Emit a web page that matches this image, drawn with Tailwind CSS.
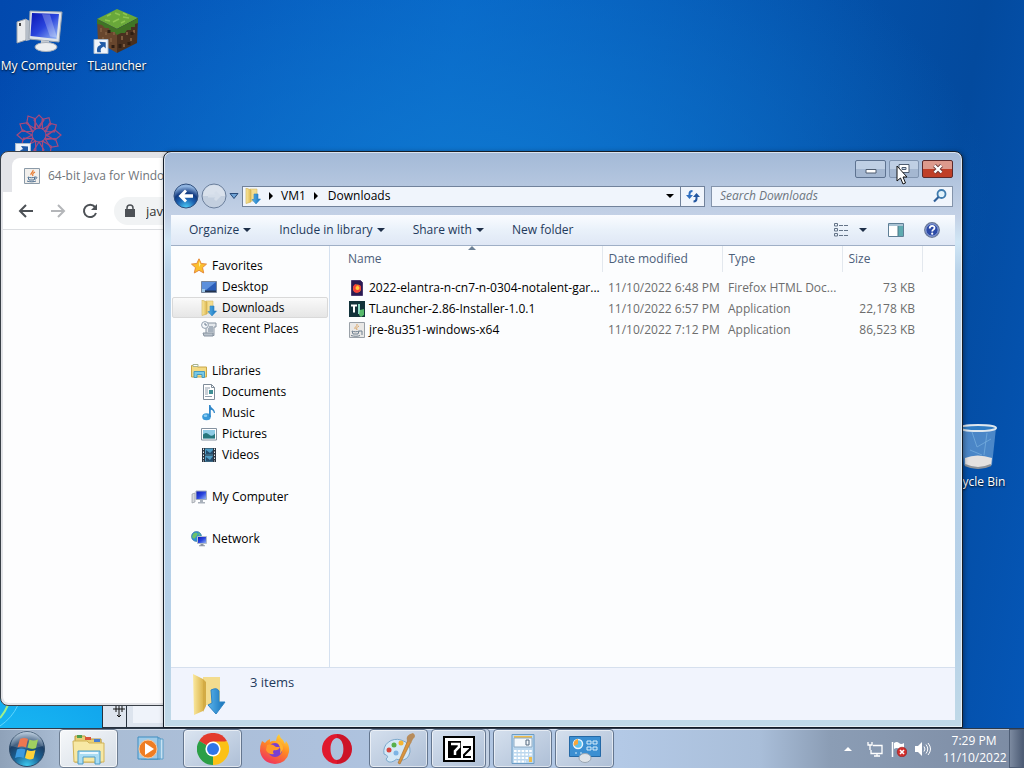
<!DOCTYPE html>
<html lang="en">
<head>
    <meta charset="UTF-8">
    <meta name="viewport" content="width=device-width, initial-scale=1.0">
    <title>Downloads</title>
    <script src="https://cdn.jsdelivr.net/npm/@tailwindcss/browser@4"></script>
</head>
<body class="font-['Open_Sans','Noto_Sans',sans-serif] text-[12px] leading-4 text-black">

    <!-- Shared icons (kept rendered at zero size so the gradients stay usable) -->
    <svg class="absolute h-0 w-0" aria-hidden="true">
        <defs>
            <linearGradient id="gold" x1="0" x2="1"><stop offset="0" stop-color="#fbe9a0"/><stop offset="1" stop-color="#dcb64e"/></linearGradient>
            <linearGradient id="screen" x1="0" y1="0" x2="1" y2="1"><stop offset="0" stop-color="#0a16b4"/><stop offset=".5" stop-color="#2a45dd"/><stop offset="1" stop-color="#9fc0f6"/></linearGradient>
            <linearGradient id="arrow" x1="0" x2="1"><stop offset="0" stop-color="#5ab4ec"/><stop offset="1" stop-color="#1470b8"/></linearGradient>
        </defs>
        <symbol id="folder-down" viewBox="0 0 36 44">
            <path d="M12 5h17v28H12z" fill="#f3dc8e"/>
            <path d="M2 2l10 5v32l-9 4z" fill="url(#gold)"/>
            <path d="M12 7l3 3v24l-3 6z" fill="#d3ab45"/>
            <path d="M20 18q6-3 8 1v11h6L25 42 17 33l4-2z" fill="url(#arrow)" stroke="#2f84c4"/>
        </symbol>
        <symbol id="folder-down-small" viewBox="0 0 16 16">
            <path d="M5 1h7v12H5z" fill="#f3dc8e" stroke="#d8bd66" stroke-width=".6"/>
            <path d="M1 0l5 2v12l-5 1.500z" fill="url(#gold)" stroke="#cfae50" stroke-width=".6"/>
            <path d="M9 6h4v5h2.500l-4.500 5-4-4.500h2z" fill="url(#arrow)" stroke="#2f84c4" stroke-width=".6"/>
        </symbol>
        <symbol id="java" viewBox="0 0 16 16">
            <path d="M.5.5h15v15H.5z" fill="#f1efec" stroke="#8b9aa8"/>
            <path d="M9 2c1 2-3 3-2 5M11 4c-2 1-3 2-2 4" fill="none" stroke="#e8772a" stroke-width="1.200"/>
            <path d="M4 9c2 1 5 1 7 0l-1 3H5zM11 9c3-.5 2 2-.5 2.300M3 13c3 1.200 7 1 9 0" fill="none" stroke="#4b6d8f"/>
        </symbol>
        <symbol id="shortcut" viewBox="0 0 16 16">
            <path d="M.5.5h15v15H.5z" fill="#eef4fb" stroke="#a9b9cb"/>
            <path d="M4 14C3 9 5 7 8 6L6 3l7 .5V10l-2-2c-3 1-4 3-3 6z" fill="#1f5aa6" stroke="none"/>
        </symbol>
        <symbol id="monitor" viewBox="0 0 16 16">
            <path d="M1 5l3-1v9l-3 1z" fill="#d7dadd" stroke="#888f99" stroke-width=".6"/>
            <path d="M5 2h10.500v8.500H5z" fill="url(#screen)" stroke="#a4adba"/>
            <path d="M9 11h3v2h2v1.500H7V13h2z" fill="#a9b1bb"/>
        </symbol>
    </svg>

    <main class="relative h-screen overflow-hidden bg-[#0560c4] bg-[radial-gradient(ellipse_640px_420px_at_0%_100%,#1cc0f5_0%,#12a8ee_20%,transparent_100%),radial-gradient(ellipse_520px_320px_at_46%_26%,#0f78d0_0%,transparent_100%),linear-gradient(100deg,#0249ae_0%,#0663c6_40%,#034a9e_85%,#0557b8_100%)]">

        <!-- Desktop shortcuts -->
        <a href="#" class="absolute top-2 left-0 flex w-[78px] flex-col items-center gap-1 text-white [text-shadow:0_1px_2px_#000]">
            <svg class="h-[46px] w-12" viewBox="0 0 48 46">
                <path d="M2 14l9-3v21l-9 3z" fill="#e9ebed" stroke="#9ba3ad"/>
                <path d="M11 11l4 2v19l-4 1z" fill="#b6bec8"/>
                <path d="M4 15h2v3H4z" fill="#444"/>
                <path d="M15 3l32 1-3 30-30-3z" fill="#dfe4ea" stroke="#98a2ae"/>
                <path d="M17 5l27 1-2.500 25L15.500 28z" fill="url(#screen)"/>
                <path d="M27 6l8 .5 7 23-7-1z" fill="#fff" opacity=".25"/>
                <path d="M26 32l8 1v5h-8z" fill="#c4cad2"/>
                <ellipse cx="31" cy="39" rx="11" ry="4.500" fill="#eceef0" stroke="#a7afb9"/>
            </svg>
            <span class="whitespace-nowrap">My Computer</span>
        </a>
        <a href="#" class="absolute top-2 left-[78px] flex w-[78px] flex-col items-center gap-1 text-white [text-shadow:0_1px_2px_#000]">
            <svg class="h-[46px] w-12" viewBox="0 0 48 46">
                <path d="M24 1l21 9-21 11L4 11z" fill="#69a83a"/>
                <path d="M4 11l20 10v24L5 34z" fill="#68462d"/>
                <path d="M45 10L24 21v24l20-10z" fill="#49301f"/>
                <path d="M4 11l20 10 21-11v5l-3 1v3l-4 0v3l-4 0-2 3-4 0-4 2-3-3-4 0-1-4-4 0-3-3-5-1z" fill="#3f7425"/>
                <path d="M14 8l4-2M22 5l5 2M30 9l6 1M20 14l6-3M12 12l5 1M28 15l4-2M34 7l-4-2" stroke="#8cc551" stroke-width="1.500"/>
                <path d="M8 20v4M13 24v3M18 30v4M10 29v2M21 24v3M29 28v4M34 24v3M38 30v3M41 22v3M31 36v3" stroke="#7d5a3d" stroke-width="2"/>
                <path d="M16 22v3M27 36v4M36 34v3M39 24v3M20 37v3" stroke="#2f1e13" stroke-width="3"/>
                <use href="#shortcut" y="31" width="16" height="15"/>
            </svg>
            <span>TLauncher</span>
        </a>
        <a href="#" aria-label="Shortcut" class="absolute top-[112px] left-[15px]">
            <svg class="h-12 w-12" viewBox="0 0 48 48" fill="none" stroke="#a64a7c" stroke-width="1.200">
                <circle cx="24" cy="23" r="7"/>
                <g id="petals">
                    <path d="M24 16l-5-8 5-5 5 5z M17 20l-4-9 M31 20l4-9"/>
                    <path d="M17 23L8 18l-6 5 6 5z M31 23l9-5 6 5-6 5z M24 30l-5 8 5 5 5-5z"/>
                </g>
                <use href="#petals" transform="rotate(30 24 23)"/>
                <use href="#petals" transform="rotate(60 24 23)"/>
                <use href="#shortcut" y="31" width="16" height="16"/>
            </svg>
        </a>
        <a href="#" class="absolute top-[422px] right-[13px] flex w-[74px] flex-col items-center gap-1 text-white [text-shadow:0_1px_2px_#000]">
            <svg class="h-12 w-12" viewBox="0 0 48 48">
                <path d="M10 6h36l-4 37q-14 7-28 0z" fill="#b7d9f4" fill-opacity=".4"/>
                <path d="M15 36q12-5 27 0l-.8 7q-13 6-26 0z" fill="#e4e1e0"/>
                <path d="M15 43q13 6 26 0" fill="none" stroke="#8d9298" stroke-width="2"/>
                <path d="M22 10l5 15 14-8M37 11l-3 22M20 28l12 5" fill="none" stroke="#79b0e0" stroke-opacity=".7"/>
                <ellipse cx="28" cy="6" rx="18" ry="3" fill="#2f7cc4" stroke="#dfe7ee" stroke-width="2"/>
            </svg>
            <span class="whitespace-nowrap">Recycle Bin</span>
        </a>

        <!-- Wallpaper light streak -->
        <svg class="absolute bottom-10 left-0 h-6 w-24" viewBox="0 0 96 24" fill="none">
            <path d="M0 14Q5 8 8 1" stroke="#9df08c" stroke-width="2"/>
            <path d="M0 22Q12 14 18 1" stroke="#5fd6fb"/>
        </svg>

        <!-- Window at the back -->
        <div class="absolute bottom-10 left-[102px] h-20 w-24 border border-[#27313d] bg-[#dde4ee]">
            <div class="absolute inset-y-0 left-[23px] w-px bg-[#27313d]"></div>
            <div class="absolute right-0 bottom-1 left-[30px] h-8 bg-[#eff3fa]"></div>
            <svg class="absolute bottom-[10px] left-[10px] h-3 w-3" viewBox="0 0 12 12" stroke="#111" fill="none"><path d="M6 0v12M0 4h12M3 1v6M9 1v6M4 10l2 2 2-2"/></svg>
        </div>

        <!-- Browser window -->
        <section class="absolute top-[151px] bottom-[62px] left-0 flex w-[300px] flex-col overflow-hidden rounded-lg border border-[#3a4048] bg-[#e3e4e8]">
            <div class="flex pt-[6px] pl-[11px]">
                <div class="flex h-[34px] w-60 items-center gap-2 rounded-t-lg bg-white pt-px pl-3 whitespace-nowrap text-[#70757a]">
                    <svg class="h-4 w-4"><use href="#java"/></svg>
                    <span>64-bit Java for Windows</span>
                </div>
            </div>
            <div class="mx-[2px] flex h-[38px] items-center gap-4 border-b border-[#dcdee1] bg-white pl-[15px] text-[#4d5156]">
                <button aria-label="Back"><svg class="h-4 w-4" viewBox="0 0 16 16" fill="none" stroke="currentColor" stroke-width="2"><path d="M15 8H2M8 2L2 8l6 6"/></svg></button>
                <button aria-label="Forward" class="text-[#b4b6b9]"><svg class="h-4 w-4" viewBox="0 0 16 16" fill="none" stroke="currentColor" stroke-width="2"><path d="M1 8h13M8 2l6 6-6 6"/></svg></button>
                <button aria-label="Reload"><svg class="h-4 w-4" viewBox="0 0 16 16" fill="none" stroke="currentColor" stroke-width="2"><path d="M13 4a6.200 6.200 0 1 0 1 6"/><path d="M15 1v6H9z" fill="currentColor" stroke="none"/></svg></button>
                <div class="flex h-7 flex-1 items-center gap-[10px] rounded-l-full bg-[#f1f3f4] pl-[10px]">
                    <svg class="h-[14px] w-3" viewBox="0 0 12 14"><path d="M1 5h10v8H1z" fill="#4d5156"/><path d="M3 6V4a3 3 0 0 1 6 0v2" fill="none" stroke="#4d5156" stroke-width="1.500"/></svg>
                    <input aria-label="Address" value="java.com" class="w-24 bg-transparent text-[13px] text-[#333]">
                </div>
            </div>
            <div class="mx-[2px] mb-[2px] flex-1 rounded-b-md bg-[#fdfdfe]"></div>
        </section>

        <!-- Explorer window -->
        <section class="absolute top-[151px] right-[61px] bottom-10 left-[163px] flex flex-col rounded-t-lg border border-[#151d28] bg-[linear-gradient(180deg,#a3b9d7_0,#b4c6df_32px,#c3d1e6_64px,#d0e6f5_90px,#b9d3ea_120px,#b5d0e8_80%,#c0d9e8_100%)] px-[7px] pb-[7px] shadow-[inset_0_0_0_1px_rgba(255,255,255,0.6),1px_1px_5px_rgba(0,0,0,0.4)]">
            <div class="relative flex justify-end gap-[3px] pt-2">
                <button aria-label="Minimize" class="flex h-[18px] w-[31px] items-center justify-center rounded-xs border border-[#5e7391] bg-linear-to-b from-[#bfcfe4] from-50% to-[#a4b7d1] to-50%">
                    <svg class="h-3 w-3" viewBox="0 0 12 12"><path d="M1 6.500h10v3.500H1z" fill="#fff" stroke="#4e5c70"/></svg>
                </button>
                <button aria-label="Maximize" class="flex h-[18px] w-[30px] items-center justify-center rounded-xs border border-[#8094b0] bg-linear-to-b from-[#bfcfe4] from-50% to-[#a4b7d1] to-50%">
                    <svg class="h-3 w-3" viewBox="0 0 12 12"><path d="M1 1.500h10v8H1z" fill="#fff" stroke="#4e5c70"/><path d="M4 4.500h4v2H4z" fill="#c9d6e7" stroke="#4e5c70"/></svg>
                </button>
                <button aria-label="Close" class="mr-[2px] flex h-[18px] w-[31px] items-center justify-center rounded-xs border border-[#5b2a2c] bg-linear-to-b from-[#dd9a8d] from-50% to-[#bf3f28] to-50%">
                    <svg class="h-3 w-3" viewBox="0 0 12 12"><path d="M2.500 2.500l7 7m0-7l-7 7" stroke="#6b3a3a" stroke-width="4"/><path d="M2.500 2.500l7 7m0-7l-7 7" stroke="#fff" stroke-width="2.400"/></svg>
                </button>
                <!-- Pointer -->
                <svg class="absolute top-[13px] right-[47px] h-5 w-3" viewBox="0 0 12 20"><path d="M1 1v15l3.500-3 2.500 6 2.500-1-2.500-6H11z" fill="#fff" stroke="#111"/></svg>
            </div>

            <!-- Address row -->
            <div class="mt-1 mb-[5px] flex h-7 items-center pr-[2px] pl-[2px]">
                <button aria-label="Back" class="shrink-0">
                    <svg class="h-[26px] w-[26px]" viewBox="0 0 26 26">
                        <defs><radialGradient id="back" cx=".5" cy="1" r=".9"><stop offset="0" stop-color="#4fd2fb"/><stop offset=".45" stop-color="#1b5fae"/><stop offset=".7" stop-color="#123a80"/><stop offset="1" stop-color="#8fb3df"/></radialGradient></defs>
                        <circle cx="13" cy="13" r="12" fill="url(#back)" stroke="#31507e"/>
                        <path d="M12 6.500L5.500 13l6.500 6.500 2-2-2.500-2.700H20v-3.600h-8.500L14 8.500z" fill="#fff"/>
                    </svg>
                </button>
                <button aria-label="Forward" class="ml-[2px] shrink-0">
                    <svg class="h-[26px] w-[26px]" viewBox="0 0 26 26"><circle cx="13" cy="13" r="12" fill="#c3cfdf" stroke="#6b7f9c"/><path d="M2 13a11 11 0 0 1 22 0z" fill="#d9e1ec"/><path d="M7 13h11M14 9l4 4-4 4" fill="none" stroke="#d4dde9" stroke-width="3"/></svg>
                </button>
                <button aria-label="Recent locations" class="ml-[2px] shrink-0"><svg class="h-2 w-[10px]" viewBox="0 0 10 8"><path d="M1 1.500h8L5 6.500z" fill="#6fa3d6" stroke="#274a79"/></svg></button>
                <div class="ml-[3px] flex h-[21px] min-w-0 flex-1 items-center border border-[#71829b] bg-[#f0f5fc]">
                    <nav class="flex flex-1 items-center pl-[2px]">
                        <svg class="h-4 w-4"><use href="#folder-down-small"/></svg>
                        <svg class="ml-[6px] h-2 w-2" viewBox="0 0 8 8"><path d="M2 0l4 4-4 4z"/></svg>
                        <a href="#" class="ml-[6px]">VM1</a>
                        <svg class="ml-[6px] h-2 w-2" viewBox="0 0 8 8"><path d="M2 0l4 4-4 4z"/></svg>
                        <a href="#" class="ml-2">Downloads</a>
                    </nav>
                    <button aria-label="Previous locations" class="px-[6px]"><svg class="h-2 w-2" viewBox="0 0 8 8"><path d="M0 2h8L4 6z"/></svg></button>
                    <button aria-label="Refresh" class="flex h-full w-6 items-center justify-center border-l border-[#71829b]">
                        <svg class="h-4 w-4" viewBox="0 0 16 16"><path d="M1 7h7l-3.500 4z" fill="#2f6fc0"/><path d="M4.500 8V6Q4.500 3 7.500 3" fill="none" stroke="#2f6fc0" stroke-width="2"/><path d="M8 9h7l-3.500-4z" fill="#2256a0"/><path d="M11.500 8v2.500q0 3-3 3" fill="none" stroke="#2256a0" stroke-width="2"/></svg>
                    </button>
                </div>
                <label class="ml-[6px] flex h-[21px] w-[242px] items-center border border-[#8494ab] bg-[#f0f5fc] pr-1 pl-2">
                    <input type="search" aria-label="Search Downloads" placeholder="Search Downloads" class="w-full bg-transparent italic outline-none placeholder:text-[#6d7580]">
                    <svg class="h-4 w-4 shrink-0" viewBox="0 0 16 16" fill="none"><circle cx="9.500" cy="6" r="4" fill="#e2f3fc" stroke="#3f7bae" stroke-width="1.800"/><path d="M6.500 9L2 13.500" stroke="#2f5f98" stroke-width="2.200"/></svg>
                </label>
            </div>

            <!-- Command bar -->
            <div class="flex h-[31px] items-center border-b border-[#9fafc6] bg-linear-to-b from-[#fafcff] via-[#e9f1fa] via-50% to-[#dfe7f5] pr-[15px] pl-[18px] whitespace-nowrap text-[#1e395b]">
                <button class="flex items-center gap-1">Organize <svg class="h-2 w-2" viewBox="0 0 8 8"><path d="M0 2h8L4 6z" fill="#1e2f48"/></svg></button>
                <button class="ml-7 flex items-center gap-1">Include in library <svg class="h-2 w-2" viewBox="0 0 8 8"><path d="M0 2h8L4 6z" fill="#1e2f48"/></svg></button>
                <button class="ml-7 flex items-center gap-1">Share with <svg class="h-2 w-2" viewBox="0 0 8 8"><path d="M0 2h8L4 6z" fill="#1e2f48"/></svg></button>
                <button class="ml-7">New folder</button>
                <button aria-label="Change view" class="ml-auto flex items-center gap-[10px]">
                    <svg class="h-4 w-4" viewBox="0 0 16 16" fill="none" stroke="#647488"><path d="M1.500 1.500h3v2.500h-3zM1.500 6.500h3V9h-3zM1.500 11.500h3V14h-3z"/><path d="M6 3.500h4m1 0h4M6 8.500h4m1 0h4M6 13.500h4m1 0h4"/></svg>
                    <svg class="h-2 w-2" viewBox="0 0 8 8"><path d="M0 2h8L4 6z" fill="#1e2f48"/></svg>
                </button>
                <button aria-label="Preview pane" class="ml-[21px]"><svg class="h-4 w-4" viewBox="0 0 16 16"><path d="M.5 1.500h15v13H.5z" fill="#fff" stroke="#5f7f96"/><path d="M1 2h14v2H1z" fill="#a9c3d4"/><path d="M10 4h5v10h-5z" fill="#5eaab0"/><path d="M10 4v10" stroke="#4c7585"/></svg></button>
                <button aria-label="Help" class="ml-5">
                    <svg class="h-4 w-4" viewBox="0 0 16 16"><circle cx="8" cy="8" r="7.300" fill="#2c4aa6" stroke="#6c7a96" stroke-width="1.200"/><circle cx="8" cy="8" r="6.200" fill="none" stroke="#b9c9ef" stroke-width=".8"/><path d="M5.700 6.500C5.700 3 10.700 3.200 10.500 6c0 1.600-2.300 1.700-2.300 3.500" fill="none" stroke="#fff" stroke-width="1.800"/><circle cx="8.200" cy="11.700" r="1.100" fill="#fff"/></svg>
                </button>
            </div>

            <div class="flex min-h-0 flex-1 bg-[#fcfdfe]">
                <!-- Navigation pane -->
                <nav class="flex w-[159px] shrink-0 flex-col gap-[21px] border-r border-[#d5e1f0] pt-[9px] whitespace-nowrap">
                    <ul>
                        <li><a href="#" class="flex h-[21px] items-center gap-[5px] pl-5">
                            <svg class="h-4 w-4" viewBox="0 0 16 16"><path d="M8 .8l2.200 4.700 5.300.6-4 3.500 1.200 5.400L8 12.300 3.300 15l1.200-5.400-4-3.500 5.300-.6z" fill="#fbc02d" stroke="#e58a3c"/><path d="M8 3l1.400 3.400L8 9z" fill="#fff1a8"/></svg>
                            Favorites</a></li>
                        <li><a href="#" class="flex h-[21px] items-center gap-[5px] pl-[30px]">
                            <svg class="h-4 w-4" viewBox="0 0 16 16"><path d="M.5 2.500h15v11H.5z" fill="#2a5db8" stroke="#76849a"/><path d="M1 3h14L5 11H1z" fill="#5d90dc"/><path d="M1 11.500h14v1.500H1z" fill="#23334d"/><path d="M1 10h3v3H1z" fill="#9cc6e8"/></svg>
                            Desktop</a></li>
                        <li><a href="#" aria-current="page" class="mr-px ml-px flex h-[21px] items-center gap-[5px] rounded-xs border border-[#d9d9d9] bg-linear-to-b from-[#fafafa] to-[#e6e6e6] pl-7">
                            <svg class="h-4 w-4"><use href="#folder-down-small"/></svg>
                            Downloads</a></li>
                        <li><a href="#" class="flex h-[21px] items-center gap-[5px] pl-[30px]">
                            <svg class="h-4 w-4" viewBox="0 0 16 16"><path d="M5 2h10v4h-2v8.500H5z" fill="#e4e8ec" stroke="#8793a0"/><path d="M2 12h10v3H3z" fill="#b9c2cb" stroke="#8793a0"/><circle cx="4" cy="4" r="3.400" fill="#f5f8fb" stroke="#93a1b0"/><path d="M4 2v2h2M8 6h4M7 8h5M7 10h5" fill="none" stroke="#6b7c90"/></svg>
                            Recent Places</a></li>
                    </ul>
                    <ul>
                        <li><a href="#" class="flex h-[21px] items-center gap-[5px] pl-5">
                            <svg class="h-4 w-4" viewBox="0 0 16 16"><path d="M.5 2.500h5l1 1.500h9v10H.5z" fill="#f3da83" stroke="#c9a648"/><path d="M2 1.500h5v2H2z" fill="#fff" stroke="#a8b490"/><path d="M3 8.500h10.500v6H11v-3H6v3H3z" fill="#79c9e6" stroke="#469bc0"/></svg>
                            Libraries</a></li>
                        <li><a href="#" class="flex h-[21px] items-center gap-[5px] pl-[30px]">
                            <svg class="h-4 w-4" viewBox="0 0 16 16"><path d="M2.500.5h8l3 3v12h-11z" fill="#fff" stroke="#7f8c99"/><path d="M10.500.5v3h3" fill="none" stroke="#7f8c99"/><path d="M4 4h5M4 6h3M4 8h3M4 10h3M4 12.500h7" stroke="#93a0ae"/><path d="M8 6h4v4H8z" fill="#3f8f94"/></svg>
                            Documents</a></li>
                        <li><a href="#" class="flex h-[21px] items-center gap-[5px] pl-[30px]">
                            <svg class="h-4 w-4" viewBox="0 0 16 16"><ellipse cx="5.500" cy="11.800" rx="4.300" ry="3.500" fill="#3a9ad9"/><path d="M8 12V0h1.500c0 3 4.500 3.500 4.500 8h-1.200c0-2-1.500-3-3-3.300V12z" fill="#2f86c8"/><ellipse cx="4.500" cy="10.800" rx="1.800" ry="1.200" fill="#8dcdf2"/></svg>
                            Music</a></li>
                        <li><a href="#" class="flex h-[21px] items-center gap-[5px] pl-[30px]">
                            <svg class="h-4 w-4" viewBox="0 0 16 16"><path d="M.5 2.500h15v11.500H.5z" fill="#fff" stroke="#8492a0"/><path d="M2 4h12v8.500H2z" fill="#8dcbe6"/><path d="M2 8.500q3-3 6 0t6-1v5H2z" fill="#26777d"/></svg>
                            Pictures</a></li>
                        <li><a href="#" class="flex h-[21px] items-center gap-[5px] pl-[30px]">
                            <svg class="h-4 w-4" viewBox="0 0 16 16"><path d="M1 1h14v14H1z" fill="#2b3440"/><path d="M4 1.500h8v6H4zM4 8.500h8v6H4z" fill="#4f9cc4"/><path d="M5 3l4 3 3-3v4H5zM5 10l4 3 3-4v5H5z" fill="#254c6c"/><path d="M2.500 1.500v13M13.500 1.500v13" stroke="#dfe6ec" stroke-dasharray="1.500 1.500"/></svg>
                            Videos</a></li>
                    </ul>
                    <a href="#" class="flex h-[21px] items-center gap-[5px] pl-5"><svg class="h-4 w-4"><use href="#monitor"/></svg>My Computer</a>
                    <a href="#" class="flex h-[21px] items-center gap-[5px] pl-5">
                        <svg class="h-4 w-4" viewBox="0 0 16 16"><circle cx="5.500" cy="5.500" r="5" fill="#2f8fd4" stroke="#2a6a9f" stroke-width=".6"/><path d="M2 3q3-3 5 0L5 6 3 8 1 6zM7 1l3 3-2 1z" fill="#6cc26a"/><path d="M6.500 5.500h9v7h-9z" fill="url(#screen)" stroke="#b5bfcb"/><path d="M9.500 13h3v1.200H14v1H8v-1h1.500z" fill="#8d96a2"/></svg>
                        Network</a>
                </nav>

                <!-- File list -->
                <div class="relative min-w-0 flex-1">
                    <svg class="absolute top-0 left-[138px] h-1 w-2" viewBox="0 0 8 4"><path d="M0 4l4-4 4 4z" fill="#6d8196"/></svg>
                    <table class="w-full table-fixed border-collapse whitespace-nowrap text-[#6d6d6d]">
                        <colgroup>
                            <col class="w-[272px]"><col class="w-[120px]"><col class="w-[120px]"><col class="w-20"><col>
                        </colgroup>
                        <thead class="text-left text-[#4c607a]">
                            <tr class="h-[26px]">
                                <th scope="col" class="border-r border-[#e3e8ee] pl-[18px] font-normal">Name</th>
                                <th scope="col" class="border-r border-[#e3e8ee] pl-[6px] font-normal">Date modified</th>
                                <th scope="col" class="border-r border-[#e3e8ee] pl-[6px] font-normal">Type</th>
                                <th scope="col" class="border-r border-[#e3e8ee] pl-[6px] font-normal">Size</th>
                                <td></td>
                            </tr>
                        </thead>
                        <tbody>
                            <tr class="h-[5px]"></tr>
                            <tr class="h-[21px]">
                                <td class="pl-[19px]"><a href="#" class="flex items-center gap-1 text-black">
                                    <svg class="h-4 w-4 shrink-0" viewBox="0 0 16 16"><path d="M2.500.5h9l2 2v13h-11z" fill="#2b1a52" stroke="#4a3a70"/><circle cx="8" cy="8.500" r="4" fill="#ff8a2b"/><path d="M4 7q1-3 3-3l1 2 3-1q2 3 0 6t-6 1z" fill="#f4403a"/><circle cx="8.500" cy="8" r="2" fill="#ffca3a"/></svg>
                                    <span class="truncate">2022-elantra-n-cn7-n-0304-notalent-gar...</span></a></td>
                                <td class="pl-[6px]">11/10/2022 6:48 PM</td>
                                <td class="pl-[6px]">Firefox HTML Doc...</td>
                                <td class="pr-[7px] text-right">73 KB</td>
                                <td></td>
                            </tr>
                            <tr class="h-[21px]">
                                <td class="pl-[19px]"><a href="#" class="flex items-center gap-1 text-black">
                                    <svg class="h-4 w-4 shrink-0" viewBox="0 0 16 16"><path d="M0 0h16v16H0z" fill="#12323a"/><path d="M2 4.500h6M5 4.500v7" stroke="#fff" stroke-width="2"/><path d="M10 3v9h2" fill="none" stroke="#8fd9c4" stroke-width="2"/><path d="M11 9l4-1v6l-3 2-2-2z" fill="#57b96b"/></svg>
                                    <span>TLauncher-2.86-Installer-1.0.1</span></a></td>
                                <td class="pl-[6px]">11/10/2022 6:57 PM</td>
                                <td class="pl-[6px]">Application</td>
                                <td class="pr-[7px] text-right">22,178 KB</td>
                                <td></td>
                            </tr>
                            <tr class="h-[21px]">
                                <td class="pl-[19px]"><a href="#" class="flex items-center gap-1 text-black">
                                    <svg class="h-4 w-4 shrink-0" viewBox="0 0 16 16"><path d="M.5.5h15v15H.5z" fill="#e9e8e6" stroke="#9aa1a8"/><path d="M8 2c1 2-3 3-2 5M10 4c-2 1-3 2-2 4" fill="none" stroke="#d9a05c"/><path d="M3 9c2 1 5 1 7 0l-1 3H4zM2 13.500c3 1 7 1 9 0M10 9h3v4" fill="none" stroke="#6f8090"/></svg>
                                    <span>jre-8u351-windows-x64</span></a></td>
                                <td class="pl-[6px]">11/10/2022 7:12 PM</td>
                                <td class="pl-[6px]">Application</td>
                                <td class="pr-[7px] text-right">86,523 KB</td>
                                <td></td>
                            </tr>
                        </tbody>
                    </table>
                </div>
            </div>

            <!-- Details pane -->
            <div class="flex h-[53px] shrink-0 border-t border-[#d6e0ee] bg-[#f1f4fd] pt-1 pl-5 text-[#1e395b]">
                <svg class="h-[44px] w-9"><use href="#folder-down"/></svg>
                <p class="pt-[2px] pl-[23px] text-[13px]">3 items</p>
            </div>
        </section>

        <!-- Taskbar -->
        <footer class="absolute inset-x-0 bottom-0 flex h-10 items-stretch border-t border-[#2d3a4b] bg-[linear-gradient(90deg,#8fa2b9_0,#a9bcd3_60px,#adc1dd_320px,#b3c9e6_620px,#a9bed9_760px,#8b9db5_830px,#7c8ba3_100%)] shadow-[inset_0_1px_0_rgba(255,255,255,0.5)]">
            <button aria-label="Start" class="mr-[13px] ml-2">
                <svg class="h-[38px] w-[38px]" viewBox="0 0 38 38">
                    <defs><radialGradient id="orb" cx=".5" cy="1" r="1"><stop offset="0" stop-color="#3fd0f5"/><stop offset=".4" stop-color="#1a6295"/><stop offset=".7" stop-color="#1c3f66"/><stop offset="1" stop-color="#b9cde0"/></radialGradient></defs>
                    <circle cx="19" cy="19" r="17.500" fill="url(#orb)" stroke="#2d4a68"/>
                    <path d="M12 9q4-2 8 0l-2 8.500q-4-2-8.500 0z" fill="#ea5a2b"/>
                    <path d="M21.500 9.500q4 2 8.500 0l-2 8.500q-4 2-8.500-.5z" fill="#8cc63f"/>
                    <path d="M9 19.500q4-2 8.500 0l-2 8.500q-4-2-8.500 0z" fill="#3b9ae0"/>
                    <path d="M19 20q4 2 8.500 0l-2 8.500q-4 2-8.500-.5z" fill="#fdd13a"/>
                    <path d="M3 16a16 16 0 0 1 32 0q-16 5-32 0z" fill="#fff" opacity=".18"/>
                </svg>
            </button>
            <div class="flex gap-[3px]">
                <button aria-label="File Explorer" class="flex w-[59px] items-center justify-center rounded-sm border border-[#6e7e92] bg-linear-to-br from-[#f6f8fa] to-[#d5dde6] shadow-[inset_0_0_0_1px_#ffffffb0]">
                    <svg class="h-8 w-9" viewBox="0 0 36 32"><path d="M4 3h10l2 3h14l1 23H4z" fill="#e9cf76" stroke="#b9983f"/><path d="M6 2h5v3H6z" fill="#4fa04c"/><path d="M14 4h6v3h-6z" fill="#d9553a"/><path d="M23 6h6v3h-6z" fill="#4a7fd0"/><path d="M2 8h14l2 2h15v19H3z" fill="#f7e8a4" stroke="#d1b358"/><path d="M7 18h22v13h-5v-7H12v7H7z" fill="#a9dcf3" stroke="#4a9cc8"/><path d="M9 20h18" stroke="#e9f8ff" stroke-width="2"/></svg>
                </button>
                <button aria-label="Media Player" class="flex w-[59px] items-center justify-center">
                    <svg class="h-7 w-7" viewBox="0 0 28 28"><path d="M7 4h19v20H7z" fill="#c9e2f2" stroke="#5c9fca"/><path d="M4 3h19v21H4z" fill="#b6d7ee" stroke="#4b96c6"/><path d="M1 2h20v22H1z" fill="#9fcbe8" stroke="#3f8dc0"/><circle cx="11" cy="14" r="9" fill="#ee7d23" stroke="#f9c79a"/><path d="M8 8l9 6-9 6z" fill="#fff"/></svg>
                </button>
                <button aria-label="Chrome" class="flex w-[59px] items-center justify-center rounded-sm border border-[#64768f] bg-linear-to-br from-[#dbe5f1] to-[#aebfd6] shadow-[inset_0_0_0_1px_#ffffff90]">
                    <svg class="h-8 w-8" viewBox="0 0 32 32"><path d="M16 16L2.100 8A16 16 0 0 1 29.900 8z" fill="#e33b2e"/><path d="M16 16L29.900 8A16 16 0 0 1 16 32z" fill="#fbc116"/><path d="M16 16v16A16 16 0 0 1 2.100 8z" fill="#2c9f46"/><path d="M16 8.500h14.100L22.500 20 16 32l6.500-12z" fill="#fbc116"/><path d="M9.500 19.800L2.100 8 10 13z" fill="#2c9f46"/><circle cx="16" cy="16" r="7.600" fill="#fff"/><circle cx="16" cy="16" r="6" fill="#2f76e8"/></svg>
                </button>
                <button aria-label="Firefox" class="flex w-[59px] items-center justify-center">
                    <svg class="h-8 w-8" viewBox="0 0 32 32"><defs><linearGradient id="fox" x1=".8" y1="0" x2=".3" y2="1"><stop offset="0" stop-color="#ffe03a"/><stop offset=".45" stop-color="#ff8a22"/><stop offset="1" stop-color="#f0305f"/></linearGradient></defs><path d="M3 8l3 2q2-3 5-4l0 3q3-2 6-1 0-4 3-7 1 4 4 6l2 4 1-3q4 5 3 11-2 11-14 12Q3 30 1 18q0-6 2-10z" fill="url(#fox)"/><circle cx="16" cy="17" r="7" fill="#7a3fd0"/><path d="M8 12q5-2 9 2l4 0q-2 4-6 3-2 2 0 4-6 1-8-4z" fill="#ff9a2a"/><path d="M16 8q8 0 8 8l-3 5q2-8-5-13z" fill="#ffb32e"/></svg>
                </button>
                <button aria-label="Opera" class="flex w-[59px] items-center justify-center">
                    <svg class="h-8 w-8" viewBox="0 0 32 32"><path fill-rule="evenodd" d="M16 1a15 15 0 1 1 0 30 15 15 0 0 1 0-30zm0 4c-4 0-6.500 5-6.500 11S12 27 16 27s6.500-5 6.500-11S20 5 16 5z" fill="#e0182d"/><path d="M16 1q13 1 15 15-2 14-15 15l0-4q6-1 6.500-11Q22 6 16 5z" fill="#a80e20" opacity=".35"/></svg>
                </button>
                <button aria-label="Paint" class="flex w-[59px] items-center justify-center rounded-sm border border-[#64768f] bg-linear-to-br from-[#d5e0ee] to-[#aebfd6] shadow-[inset_0_0_0_1px_#ffffff90]">
                    <svg class="h-8 w-9" viewBox="0 0 36 32"><path d="M3 21C1 11 11 4 20 7q10 3 9 12-2 9-10 8-4-2-6 1-6 3-8-2 4-3-2-5z" fill="#d4e8f6" stroke="#7ba8cb"/><circle cx="8" cy="17" r="2.500" fill="#d9453c"/><circle cx="13" cy="12" r="2.500" fill="#57b04b"/><circle cx="20" cy="10" r="2.500" fill="#f4b533"/><circle cx="15" cy="20" r="2.500" fill="#7db4e4"/><path d="M27 7l3 2-11 22-2-1z" fill="#d9953f" stroke="#a66a24" stroke-width=".6"/><path d="M26 8Q24 2 32 0q4 3 0 6l-2 4z" fill="#b78c5c"/></svg>
                </button>
                <button aria-label="7-Zip" class="relative mr-1 flex w-[55px] items-center justify-center rounded-sm border border-[#64768f] bg-linear-to-br from-[#d5e0ee] to-[#aebfd6] shadow-[inset_0_0_0_1px_#ffffff90,3px_0_0_#c2d0e3,4px_0_0_#64768f]">
                    <svg class="h-[26px] w-8" viewBox="0 0 32 26"><path d="M1 1h30v24H1z" fill="#fff" stroke="#000" stroke-width="2"/><path d="M5 5h13v17H5z"/><path d="M8 8h8v3l-4 4v4" fill="none" stroke="#fff" stroke-width="2.500"/><path d="M20 11h7v2l-6 6v2h7" fill="none" stroke="#000" stroke-width="2"/></svg>
                </button>
                <button aria-label="Calculator" class="flex w-[59px] items-center justify-center rounded-sm border border-[#64768f] bg-linear-to-br from-[#d5e0ee] to-[#aebfd6] shadow-[inset_0_0_0_1px_#ffffff90]">
                    <svg class="h-[30px] w-6" viewBox="0 0 24 30"><path d="M1 .5h22v29H1z" fill="#bcd8ef" stroke="#6b9cc5"/><path d="M3 2h18v2H3z" fill="#eebc4c"/><path d="M3 4h18v9H3z" fill="#f3f8fc" stroke="#8caac4"/><path d="M15 6h3v5h-3z" fill="none" stroke="#51667c"/><path d="M3 17h18M3 20.500h18M3 24h18M3 27.500h12" stroke="#fff" stroke-width="2.200" stroke-dasharray="2.600 1.200"/><path d="M18 23h3v5h-3z" fill="#eebc4c"/></svg>
                </button>
                <button aria-label="Control Panel" class="flex w-[59px] items-center justify-center rounded-sm border border-[#64768f] bg-linear-to-br from-[#d5e0ee] to-[#aebfd6] shadow-[inset_0_0_0_1px_#ffffff90]">
                    <svg class="h-7 w-8" viewBox="0 0 32 28"><path d="M.5 1.500h31v20H.5z" fill="#3b8fd2" stroke="#2469a6"/><circle cx="9" cy="9" r="4.500" fill="#5cc0ee" stroke="#e7f4fd" stroke-width="1.500"/><path d="M9 9V4a5 5 0 0 0-4 7z" fill="#f5a73b"/><path d="M18 6h4v3h-4zM24 6h4v3h-4zM18 12h4v3h-4zM24 12h4v3h-4zM6 18h2m3 0h2" fill="none" stroke="#d9eefb"/><ellipse cx="16" cy="23" rx="6" ry="4.500" fill="#dfe4e9" stroke="#9aa6b2"/></svg>
                </button>
            </div>

            <!-- Notification area -->
            <div class="ml-auto flex items-center text-white">
                <button aria-label="Show hidden icons" class="mr-[15px]"><svg class="h-[6px] w-2" viewBox="0 0 8 6"><path d="M0 5l4-4 4 4z" fill="#fff"/></svg></button>
                <button aria-label="Network" class="mr-2"><svg class="h-4 w-4" viewBox="0 0 16 16" fill="none" stroke="#fff" stroke-width="1.300"><path d="M6 4.500h9v8H4V9M7 15h6M10 12.500V15M1 1v3h4V1M3 4v5"/></svg></button>
                <button aria-label="Action Center" class="mr-2"><svg class="h-4 w-4" viewBox="0 0 16 16"><path d="M1.500 1v15" stroke="#fff" stroke-width="1.500"/><path d="M3 2q3-2 5 0t5 0v7q-3 1-5-1T3 8z" fill="#fff"/><circle cx="11" cy="11" r="4.800" fill="#d22f2c" stroke="#8f1d1c" stroke-width=".6"/><path d="M9 9l4 4m0-4l-4 4" stroke="#fff" stroke-width="1.600"/></svg></button>
                <button aria-label="Volume" class="mr-3"><svg class="h-4 w-4" viewBox="0 0 16 16"><path d="M0 5h3l4-4v14l-4-4H0z" fill="#fff"/><path d="M9 5.500q2 2.500 0 5M11 3.500q3.500 4.500 0 9M13 2q5 6 0 12" fill="none" stroke="#fff"/></svg></button>
                <time datetime="2022-11-10T19:29" class="w-[62px] text-center leading-[17px] whitespace-nowrap">7:29 PM<br>11/10/2022</time>
                <button aria-label="Show desktop" class="ml-1 h-full w-[15px] border border-[#4e5d75] bg-linear-to-r from-[#7c8aa0] to-[#4d5c75]"></button>
            </div>
        </footer>
    </main>
</body>
</html>
